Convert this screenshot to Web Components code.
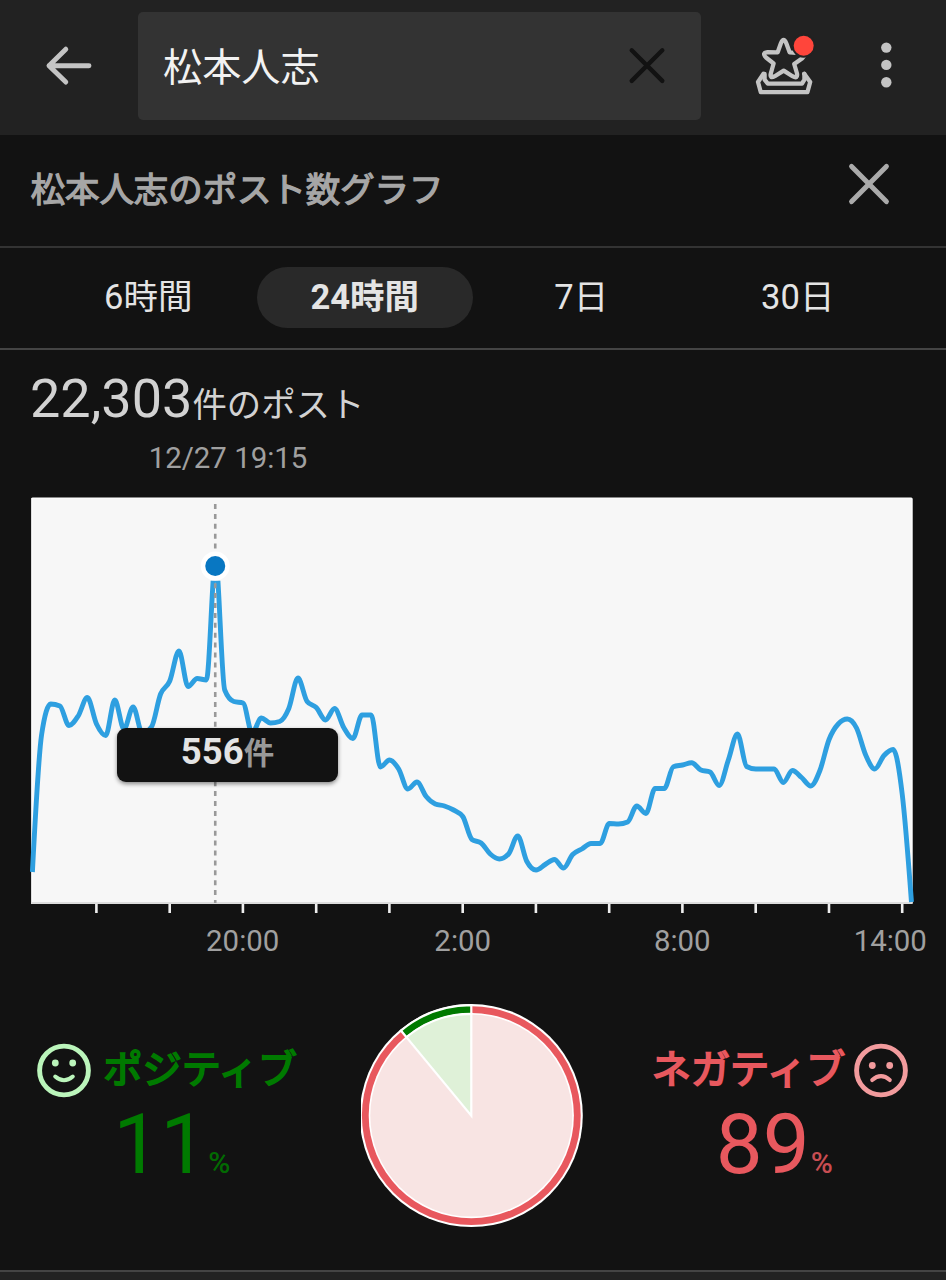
<!DOCTYPE html>
<html lang="ja">
<head>
<meta charset="utf-8">
<title>松本人志のポスト数グラフ</title>
<style>
  body {
    margin: 0;
    background: #121212;
    color: #e4e4e4;
    font-family: Roboto, "Noto Sans CJK JP", sans-serif;
  }
</style>
</head>
<body>
<search-header><search-field>松本人志</search-field></search-header>
<graph-panel>
  <panel-title slot="title">松本人志のポスト数グラフ</panel-title>
  <period-tabs slot="tabs">
    <period-tab>6時間</period-tab>
    <period-tab selected>24時間</period-tab>
    <period-tab>7日</period-tab>
    <period-tab>30日</period-tab>
  </period-tabs>
  <post-summary>22,303<span slot="unit">件のポスト</span><span slot="date">12/27 19:15</span></post-summary>
  <post-chart selected="20">556<span slot="unit">件</span></post-chart>
  <sentiment-summary>
    <sentiment-score kind="positive" slot="positive">11<span slot="label">ポジティブ</span></sentiment-score>
    <sentiment-pie positive="11"></sentiment-pie>
    <sentiment-score kind="negative" slot="negative">89<span slot="label">ネガティブ</span></sentiment-score>
  </sentiment-summary>
</graph-panel>

<script>
// Shared by all elements: attach an open root and fill it.
class BaseElement extends HTMLElement {
  constructor() {
    super();
    this.attachShadow({mode: 'open'});
  }

  connectedCallback() {
    this.shadowRoot.innerHTML = this.render();
  }
}

class SearchHeader extends BaseElement {
  render() {
    return `
      <style>
        :host {
          display: flex;
          height: 135px;
          box-sizing: border-box;
          padding-top: 12px;
          background: #222;
        }
        svg { display: block; flex: none; height: 108px; }
        .field { width: 563px; }
        g { fill: none; stroke: #c4c4c4; stroke-linecap: round; stroke-linejoin: round; }
      </style>
      <svg width="138" viewBox="0 12 138 108">
        <g stroke-width="4.9"><path d="M89 65.7H49M65.8 49.2 49 65.7l16.8 16.4"/></g>
      </svg>
      <div class="field"><slot></slot></div>
      <svg width="245" viewBox="701 12 245 108">
        <g stroke-width="4.3">
          <path d="M780.8 43.5Q783.6 36.5 786.4 43.5L789.6 52.3 800 53Q808 53.5 802 58.5L794.2 64 797 73.5Q798 79.5 792.5 76.2L783.7 70.6 774.8 76.2Q769.5 79 770.8 73.5L773.6 63.5 766 57.5Q761.5 53 767.5 52.2L777.7 52.3Z"/>
          <path d="M763.5 73.8l-5.5 8.2 2.8 10.2h46.6l2.8-10.2-6-8.2"/>
          <path d="M764.6 74v5.6l3.2 4h34.2l2.4-4V74"/>
        </g>
        <circle cx="803.7" cy="45.7" r="12" fill="#222"/>
        <circle cx="803.7" cy="45.7" r="10" fill="#ff453b"/>
        <circle cx="886.3" cy="47.6" r="5.2" fill="#c4c4c4"/>
        <circle cx="886.3" cy="64.9" r="5.2" fill="#c4c4c4"/>
        <circle cx="886.3" cy="82.2" r="5.2" fill="#c4c4c4"/>
      </svg>`;
  }
}

class SearchField extends BaseElement {
  render() {
    return `
      <style>
        :host {
          display: flex;
          align-items: center;
          justify-content: space-between;
          height: 108px;
          box-sizing: border-box;
          padding: 0 34px 0 25px;
          border-radius: 5px;
          background: #333;
          color: #f2f2f2;
          font-size: 39.2px;
          line-height: 108px;
        }
        span { padding-top: 3px; }
        svg { width: 40px; height: 40px; }
      </style>
      <span><slot></slot></span>
      <svg viewBox="-20 -20 40 40"><path d="M-15.3-15.7 15.3 14.9M15.3-15.7-15.3 14.9" stroke="#121212" stroke-width="4.4" stroke-linecap="round"/></svg>`;
  }
}

class GraphPanel extends BaseElement {
  render() {
    return `
      <style>
        :host { display: block; background: #222; height: 1145px; }
        section { height: 1135px; background: #121212; border-bottom: 2px solid #444; }
      </style>
      <section>
        <slot name="title"></slot>
        <slot name="tabs"></slot>
        <slot></slot>
      </section>`;
  }
}

class PanelTitle extends BaseElement {
  render() {
    return `
      <style>
        :host {
          display: flex;
          justify-content: space-between;
          height: 113px;
          box-sizing: border-box;
          padding: 0 52px 0 30.7px;
          border-bottom: 2px solid #333;
          color: #a6a6a6;
          font-size: 34.4px;
          line-height: 110px;
          -webkit-text-stroke: 1.3px;
        }
        svg { width: 50px; height: 50px; margin-top: 24px; }
      </style>
      <span><slot></slot></span>
      <svg viewBox="-25 -25 50 50"><path d="M-17.4-17.6 17.4 17.6M17.4-17.6-17.4 17.6" stroke="#aaa" stroke-width="5" stroke-linecap="round"/></svg>`;
  }
}

class PeriodTabs extends BaseElement {
  render() {
    return `
      <style>
        :host {
          display: grid;
          grid-template-columns: repeat(4, 1fr);
          height: 102px;
          box-sizing: border-box;
          padding: 19px 40px 0;
          border-bottom: 2px solid #444;
        }
      </style>
      <slot></slot>`;
  }
}

class PeriodTab extends BaseElement {
  render() {
    return `
      <style>
        :host {
          display: block;
          height: 61px;
          border-radius: 31px;
          text-align: center;
          font-size: 34.5px;
          line-height: 61px;
        }
        :host([selected]) { background: #292929; font-weight: 700; }
      </style>
      <slot></slot>`;
  }
}

class PostSummary extends BaseElement {
  render() {
    return `
      <style>
        :host { display: block; height: 140px; box-sizing: border-box; padding-top: 17px; }
        .count { padding-left: 30px; font-size: 54px; line-height: 64px; color: #d2d2d2; }
        .unit { font-size: 34.4px; }
        .date {
          width: 221px;
          margin: 3px 0 0 117.5px;
          text-align: center;
          font-size: 29.4px;
          line-height: 36px;
          color: #a0a0a0;
        }
      </style>
      <div class="count"><slot></slot><span class="unit"><slot name="unit"></slot></span></div>
      <div class="date"><slot name="date"></slot></div>`;
  }
}

const LEFT = 32.4;
const STEP = 9.157;
// One value every 15 minutes, as the y coordinate on the chart.
const POINTS = [
  872, 735, 704, 706, 725.5, 716, 697.5, 724, 735.5, 700, 729, 707, 733, 727,
  694, 681, 651, 686.5, 678.5, 680, 560, 690, 701.5, 703, 733, 718, 723, 721.5,
  708.5, 678, 701.5, 707.5, 720, 708.5, 727.5, 738.5, 715, 715, 767, 760, 769,
  789, 782, 796.5, 804, 806, 810, 816.5, 839.5, 843, 854, 859, 854, 836, 861.5,
  870, 864.5, 859.5, 868, 854.5, 849, 843.5, 843.5, 823.5, 824, 822, 806, 813.5,
  788.5, 788.5, 766.7, 765, 762.7, 770, 772, 785.5, 760, 734, 766.5, 769, 769,
  769, 782.5, 770.5, 777.5, 786, 770.5, 739.5, 724, 719, 728, 755, 769, 755.5,
  749.5, 795, 902
];

// Monotone cubic curve, so that peaks never overshoot their point.
function curve(ys) {
  const slopes = ys.slice(1).map((y, i) => (y - ys[i]) / STEP);
  const tangents = ys.map((y, i) => {
    const a = slopes[i - 1];
    const b = slopes[i];
    if (a === undefined || b === undefined) return null;
    if (a * b <= 0) return 0;
    return Math.sign(a) * 2 * Math.min(Math.abs(a), Math.abs(b), Math.abs(a + b) / 4);
  });
  const last = ys.length - 1;
  tangents[0] = (3 * slopes[0] - tangents[1]) / 2;
  tangents[last] = (3 * slopes[last - 1] - tangents[last - 1]) / 2;
  let d = `M${LEFT} ${ys[0]}`;
  for (let i = 0; i < last; i++) {
    const x = LEFT + i * STEP;
    const third = STEP / 3;
    d += `C${[x + third, ys[i] + tangents[i] * third,
      x + 2 * third, ys[i + 1] - tangents[i + 1] * third,
      x + STEP, ys[i + 1]].map(n => n.toFixed(2)).join(' ')}`;
  }
  return d;
}

class PostChart extends BaseElement {
  render() {
    const x = LEFT + this.getAttribute('selected') * STEP - 0.3;
    let ticks = '';
    for (let i = 7; i < POINTS.length; i += 8) {
      ticks += `M${(LEFT + i * STEP - 0.1).toFixed(1)} 904v9`;
    }
    return `
      <style>
        :host { display: block; position: relative; height: 480px; }
        svg { display: block; }
        text { fill: #a0a0a0; font-size: 29.4px; text-anchor: middle; }
        .tip {
          position: absolute;
          left: 117px;
          top: 238px;
          width: 221px;
          height: 54px;
          border-radius: 9px;
          background: #121212;
          box-shadow: 0 2px 4px rgba(0, 0, 0, .45);
          color: #e4e4e4;
          font-size: 36.5px;
          font-weight: 700;
          line-height: 48px;
          text-align: center;
        }
        .unit { font-size: 30.5px; color: #999; }
      </style>
      <svg width="946" height="480" viewBox="0 490 946 480">
        <rect x="31" y="497.5" width="881.7" height="406.5" rx="1.5" fill="#fff"/>
        <path d="M31.5 498V904" stroke="#ddd"/>
        <rect x="32.5" y="498.5" width="879" height="404" fill="#f7f7f7"/>
        <path d="M31.5 903H912.5" stroke="#ddd" stroke-width="2"/>
        <path d="${ticks}" stroke="#eee" stroke-width="2.6"/>
        <path d="${curve(POINTS)}" fill="none" stroke="#2e9fe0" stroke-width="4.9" stroke-linejoin="round"/>
        <path d="M${x} 504V903" stroke="#999" stroke-width="2.6" stroke-dasharray="5 4.9"/>
        <path d="M${x - 8} 550h16v30.7h-16z" fill="#f7f7f7"/>
        <circle cx="${x}" cy="566" r="14.5" fill="#fff"/>
        <circle cx="${x}" cy="566" r="10" fill="#0877c2"/>
        <text x="242.7" y="950.5">20:00</text>
        <text x="462.7" y="950.5">2:00</text>
        <text x="682.3" y="950.5">8:00</text>
        <text x="890.3" y="950.5">14:00</text>
      </svg>
      <div class="tip"><slot></slot><span class="unit"><slot name="unit"></slot></span></div>`;
  }
}

class SentimentSummary extends BaseElement {
  render() {
    return `
      <style>
        :host {
          display: grid;
          grid-template-columns: 265px 1fr 265px;
          height: 300px;
          box-sizing: border-box;
          padding: 34px 37.7px 0 37.3px;
        }
      </style>
      <slot name="positive"></slot><slot></slot><slot name="negative"></slot>`;
  }
}

class SentimentScore extends BaseElement {
  render() {
    const happy = this.getAttribute('kind') === 'positive';
    const eyes = happy ? -7.5 : -5;
    const mouth = happy ? 'M-8.8 6Q0 13.5 8.8 6' : 'M-8.8 9.6Q0 1.8 8.8 9.6';
    return `
      <style>
        :host { display: block; color: #007a00; --face: #bbf5bb; --row: row; --gap: 12px; --shift: 76px; }
        :host([kind=negative]) { color: #e8585e; --face: #f29b9d; --row: row-reverse; --gap: 9px; --shift: 72.5px; }
        .label {
          display: flex;
          flex-direction: var(--row);
          gap: var(--gap);
          margin-top: 39px;
          height: 55px;
          font-size: 39.2px;
          line-height: 55px;
          -webkit-text-stroke: 1.9px;
        }
        svg { flex: none; width: 54px; height: 55px; }
        .value { padding-left: var(--shift); font-size: 83.5px; line-height: 98px; margin-top: -2px; }
        .percent { font-size: 30px; font-weight: 500; margin-left: 1px; opacity: .85; }
      </style>
      <div class="label">
        <svg viewBox="-27 -27.5 54 55">
          <circle r="24.4" fill="none" stroke="var(--face)" stroke-width="4.9"/>
          <circle cx="-8.7" cy="${eyes}" r="3.4" fill="var(--face)"/>
          <circle cx="8.7" cy="${eyes}" r="3.4" fill="var(--face)"/>
          <path d="${mouth}" fill="none" stroke="var(--face)" stroke-width="4" stroke-linecap="round"/>
        </svg>
        <span><slot name="label"></slot></span>
      </div>
      <div class="value"><slot></slot><span class="percent">%</span></div>`;
  }
}

class SentimentPie extends BaseElement {
  render() {
    const angle = this.getAttribute('positive') / 100 * 2 * Math.PI;
    const wedge = r => `M0 0V${-r}A${r} ${r} 0 0 0 ${-r * Math.sin(angle)} ${-r * Math.cos(angle)}Z`;
    return `
      <style>
        :host { display: block; }
        svg { display: block; margin-left: 58.7px; }
      </style>
      <svg width="222" height="224" viewBox="-110.3 -111.6 222 224">
        <circle r="111.5" fill="#fff"/>
        <circle r="109.4" fill="#e8585e"/>
        <path d="${wedge(110.4)}" fill="#007a00" stroke="#fff" stroke-width="2.2"/>
        <circle r="102.6" fill="#fff"/>
        <circle r="101" fill="#f8e4e3"/>
        <path d="${wedge(101.8)}" fill="#dff1d8" stroke="#fff" stroke-width="2.2"/>
      </svg>`;
  }
}

customElements.define('search-header', SearchHeader);
customElements.define('search-field', SearchField);
customElements.define('graph-panel', GraphPanel);
customElements.define('panel-title', PanelTitle);
customElements.define('period-tabs', PeriodTabs);
customElements.define('period-tab', PeriodTab);
customElements.define('post-summary', PostSummary);
customElements.define('post-chart', PostChart);
customElements.define('sentiment-summary', SentimentSummary);
customElements.define('sentiment-score', SentimentScore);
customElements.define('sentiment-pie', SentimentPie);
</script>
</body>
</html>
